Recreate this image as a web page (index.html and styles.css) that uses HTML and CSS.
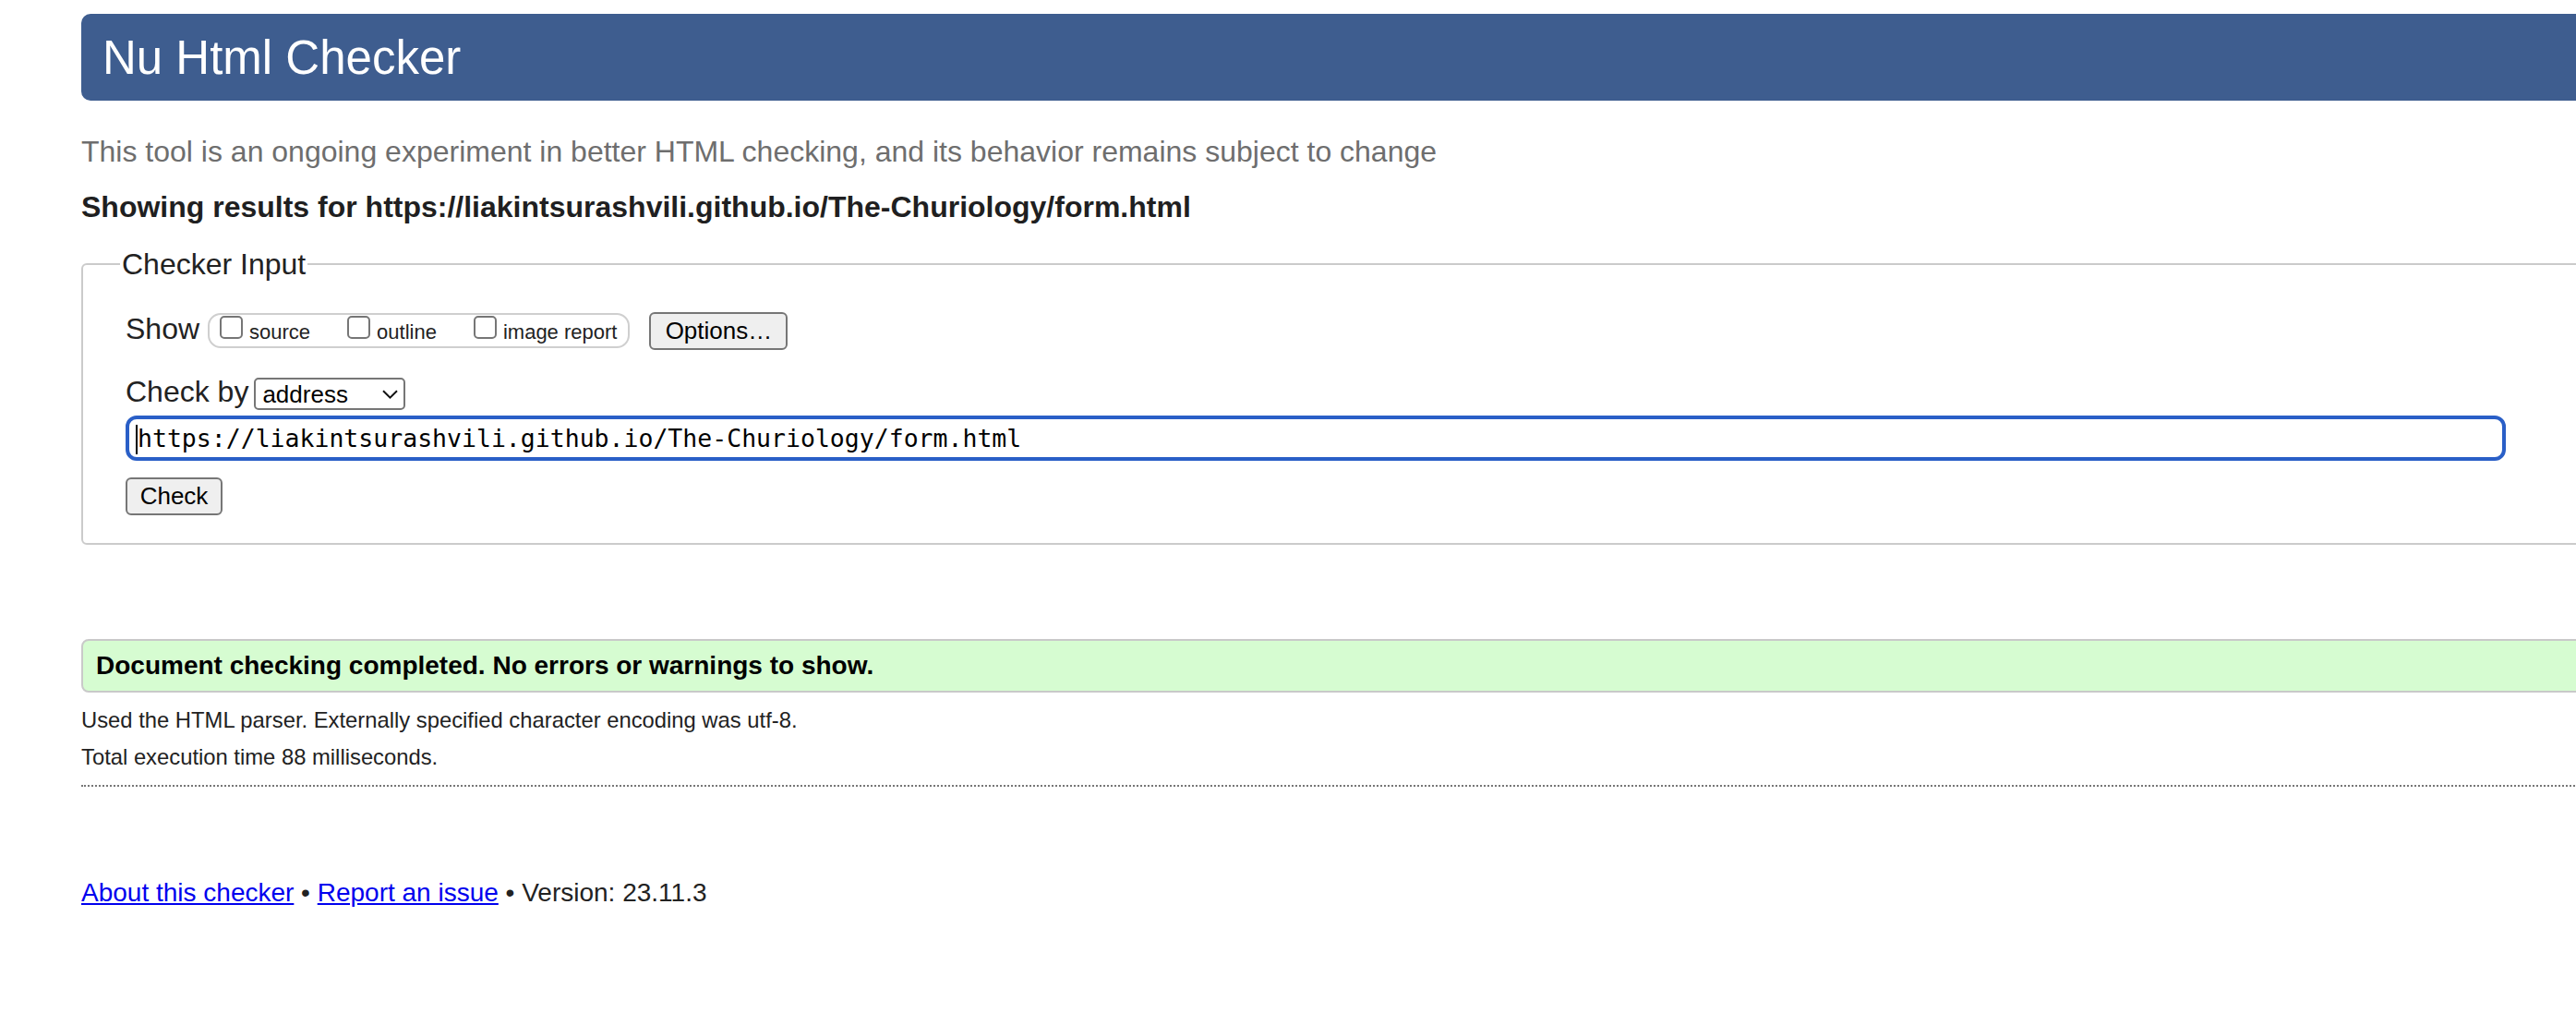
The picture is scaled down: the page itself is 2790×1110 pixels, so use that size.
FILE: index.html
```html
<!DOCTYPE html>
<html lang="en">
<head>
<meta charset="utf-8">
<title>Showing results for https://liakintsurashvili.github.io/The-Churiology/form.html - Nu Html Checker</title>
<link rel="stylesheet" href="styles.css">
</head>
<body>
<div class="page">
  <h1 class="banner">Nu Html Checker</h1>
  <p class="intro">This tool is an ongoing experiment in better HTML checking, and its behavior remains subject to change</p>
  <p class="showing">Showing results for https://liakintsurashvili.github.io/The-Churiology/form.html</p>
  <form class="checker">
    <fieldset class="checker-fs">
      <legend class="checker-legend">Checker Input</legend>
      <div class="show-row">
        <span class="row-label">Show</span>
        <div class="show-group">
          <label class="opt"><span class="cb"></span><span class="opt-text">source</span></label>
          <label class="opt"><span class="cb"></span><span class="opt-text">outline</span></label>
          <label class="opt"><span class="cb"></span><span class="opt-text">image report</span></label>
        </div>
        <button type="button" class="btn btn-options">Options…</button>
      </div>
      <div class="by-row">
        <span class="row-label">Check by</span>
        <span class="select-wrap">
          <select class="select"><option>address</option></select>
          <svg class="chev" width="17" height="10" viewBox="0 0 17 10"><path d="M1 1.2L8.5 8.6L16 1.2" fill="none" stroke="#111" stroke-width="2"/></svg>
        </span>
      </div>
      <div class="url-wrap">
        <input class="url" type="url" value="https://liakintsurashvili.github.io/The-Churiology/form.html">
        <span class="caret"></span>
      </div>
      <button type="button" class="btn btn-check">Check</button>
    </fieldset>
  </form>
  <div class="success">Document checking completed. No errors or warnings to show.</div>
  <p class="meta meta-first">Used the HTML parser. Externally specified character encoding was utf-8.</p>
  <p class="meta">Total execution time 88 milliseconds.</p>
  <hr class="sep">
  <p class="footer"><a href="#">About this checker</a> • <a href="#">Report an issue</a> • Version: 23.11.3</p>
</div>
</body>
</html>
```

FILE: styles.css
```css
html {
  overflow: hidden;
}

body {
  margin: 0;
  background: #ffffff;
  color: #222222;
  font-family: "Liberation Sans", Arial, Helvetica, sans-serif;
}

.page {
  width: 2760px;
  padding: 15px 0 0 88px;
}

.banner {
  margin: 0;
  height: 94px;
  box-sizing: border-box;
  padding: 1px 0 0 23px;
  background: #3e5d8f;
  color: #ffffff;
  border-radius: 10px;
  font-size: 51px;
  font-weight: normal;
  line-height: 93px;
}

.intro {
  margin: 35px 0 0;
  font-size: 32px;
  line-height: 40px;
  color: #6e6e6e;
}

.showing {
  margin: 20px 0 0;
  font-size: 32px;
  line-height: 40px;
  font-weight: bold;
  color: #1f1f21;
}

.checker {
  margin: 0;
}

.checker-fs {
  margin: 22px 0 0;
  min-width: 0;
  padding: 32px 0 30px 46px;
  border: 2px solid #cbcbcb;
  border-radius: 6px;
}

.checker-legend {
  margin-left: -6px;
  padding: 0 2px;
  font-size: 32px;
  line-height: 40px;
  color: #222222;
}

.show-row {
  display: flex;
  align-items: flex-start;
  height: 41px;
}

.row-label {
  font-size: 32px;
  line-height: 36px;
  color: #222222;
}

.show-group {
  display: flex;
  align-items: flex-start;
  box-sizing: border-box;
  height: 38px;
  margin: 1px 0 0 9px;
  padding: 1px 12px 0 11px;
  border: 2px solid #cfcfcf;
  border-radius: 14px;
}

.opt {
  display: flex;
  align-items: baseline;
  gap: 7px;
  margin-right: 40px;
}

.opt:last-child {
  margin-right: 0;
}

.cb {
  display: block;
  width: 25px;
  height: 25px;
  box-sizing: border-box;
  border: 2px solid #767676;
  border-radius: 5px;
  background: #ffffff;
}

.opt-text {
  font-size: 22px;
  line-height: 26px;
  color: #222222;
}

.btn {
  box-sizing: border-box;
  height: 41px;
  padding: 0;
  border: 2px solid #767676;
  border-radius: 6px;
  background: #efefef;
  color: #000000;
  font-family: "Liberation Sans", Arial, Helvetica, sans-serif;
  font-size: 26px;
  line-height: 29px;
}

.btn-options {
  width: 150px;
  margin-left: 21px;
}

.by-row {
  display: flex;
  align-items: flex-start;
  margin-top: 27px;
}

.select-wrap {
  position: relative;
  display: block;
  margin: 3px 0 0 6px;
}

.select {
  display: block;
  width: 164px;
  height: 35px;
  box-sizing: border-box;
  margin: 0;
  padding: 0 0 0 7px;
  border: 2px solid #767676;
  border-radius: 5px;
  background: #ffffff;
  color: #000000;
  font-family: "Liberation Sans", Arial, Helvetica, sans-serif;
  font-size: 26px;
  -webkit-appearance: none;
  appearance: none;
}

.chev {
  position: absolute;
  left: 139px;
  top: 13px;
  pointer-events: none;
}

.url-wrap {
  position: relative;
  margin-top: 6px;
  width: 2578px;
}

.url {
  display: block;
  width: 2578px;
  height: 49px;
  box-sizing: border-box;
  margin: 0;
  padding: 0 0 0 9px;
  border: 4px solid #2a5fc7;
  border-radius: 12px;
  background: #ffffff;
  color: #000000;
  font-family: "DejaVu Sans Mono", "Liberation Mono", monospace;
  font-size: 26.5px;
  outline: none;
}

.caret {
  position: absolute;
  left: 11px;
  top: 10px;
  width: 2px;
  height: 32px;
  background: #000000;
}

.btn-check {
  display: block;
  width: 105px;
  margin-top: 18px;
}

.success {
  margin-top: 102px;
  height: 58px;
  box-sizing: border-box;
  padding-left: 14px;
  border: 2px solid #c9c9c9;
  border-radius: 8px;
  background: #d6fcd1;
  color: #000000;
  font-size: 28px;
  font-weight: bold;
  line-height: 54px;
}

.meta {
  margin: 0;
  font-size: 23.8px;
  line-height: 40px;
  color: #222222;
}

.meta-first {
  margin-top: 10px;
}

.sep {
  margin: 10px 0 0;
  height: 0;
  border: 0;
  border-top: 2px dotted #777777;
}

.footer {
  margin: 95px 0 0;
  font-size: 28px;
  line-height: 40px;
  color: #222222;
}

.footer a {
  color: #0000ee;
  text-decoration: underline;
}
```
